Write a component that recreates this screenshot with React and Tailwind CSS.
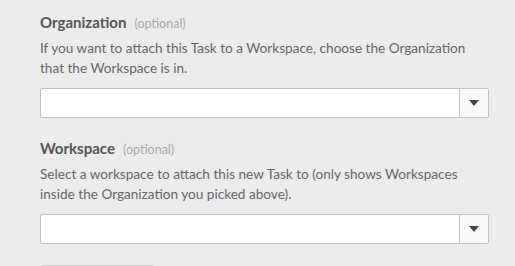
export default function App() {
  const sections = [
    {
      title: "Organization",
      desc: "If you want to attach this Task to a Workspace, choose the Organization that the Workspace is in.",
    },
    {
      title: "Workspace",
      desc: "Select a workspace to attach this new Task to (only shows Workspaces inside the Organization you picked above).",
    },
  ];
  return (
    <div className="w-[515px] h-[266px] overflow-hidden bg-[#ececec] pl-[40px] pr-[26px] pt-[12px]" style={{ fontFamily: "Lato, 'Open Sans', sans-serif" }}>
      {sections.map((s, i) => (
        <div key={i} className={i > 0 ? "mt-[20px]" : ""}>
          <div className="flex items-baseline h-[20px] leading-[20px]">
            <span className="text-[15px] font-bold text-[#555555]">{s.title}</span>
            <span className="ml-[8px] text-[12.5px] text-[#aaaaaa]">(optional)</span>
          </div>
          <p className="mt-[6px] text-[13.6px] leading-[20px] text-[#666666] w-[440px]">{s.desc}</p>
          <div className="mt-[10px] flex h-[30px] w-[449px] border border-[#c0c0c0] rounded-[2px] bg-white">
            <div className="flex-1" />
            <div className="w-[29px] border-l border-[#c8c8c8] bg-[#fafafa] flex items-center justify-center">
              <svg width="10" height="6" viewBox="0 0 10 6">
                <path d="M0 0 H10 L5 6 Z" fill="#444444" />
              </svg>
            </div>
          </div>
        </div>
      ))}
      <div className="mt-[21px] ml-[1px] w-[114px] h-[30px] rounded-[3px] bg-[#d2d2d2]" />
    </div>
  );
}
